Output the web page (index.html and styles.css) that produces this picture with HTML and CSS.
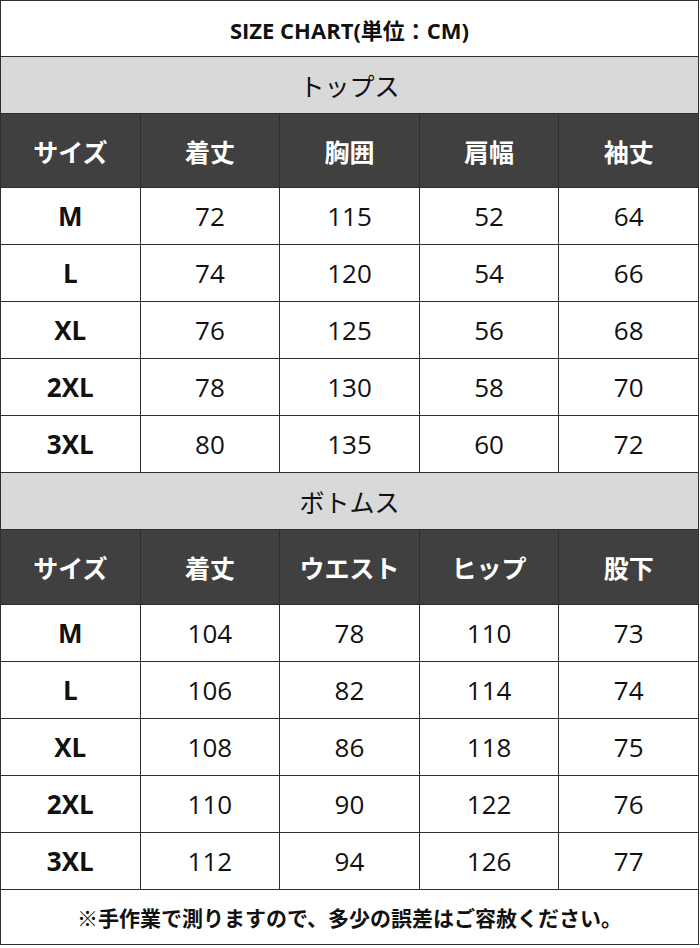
FILE: index.html
```html
<!DOCTYPE html>
<html lang="ja">
<head>
<meta charset="utf-8">
<title>SIZE CHART</title>
<link rel="stylesheet" href="styles.css">
</head>
<body>
<table class="chart">
  <colgroup><col><col><col><col><col></colgroup>
  <tr class="title"><td colspan="5">SIZE CHART(単位：CM)</td></tr>
  <tr class="section"><td colspan="5">トップス</td></tr>
  <tr class="head head-1"><th>サイズ</th><th>着丈</th><th>胸囲</th><th>肩幅</th><th>袖丈</th></tr>
  <tr class="row"><th>M</th><td>72</td><td>115</td><td>52</td><td>64</td></tr>
  <tr class="row"><th>L</th><td>74</td><td>120</td><td>54</td><td>66</td></tr>
  <tr class="row"><th>XL</th><td>76</td><td>125</td><td>56</td><td>68</td></tr>
  <tr class="row"><th>2XL</th><td>78</td><td>130</td><td>58</td><td>70</td></tr>
  <tr class="row"><th>3XL</th><td>80</td><td>135</td><td>60</td><td>72</td></tr>
  <tr class="section"><td colspan="5">ボトムス</td></tr>
  <tr class="head head-2"><th>サイズ</th><th>着丈</th><th>ウエスト</th><th>ヒップ</th><th>股下</th></tr>
  <tr class="row"><th>M</th><td>104</td><td>78</td><td>110</td><td>73</td></tr>
  <tr class="row"><th>L</th><td>106</td><td>82</td><td>114</td><td>74</td></tr>
  <tr class="row"><th>XL</th><td>108</td><td>86</td><td>118</td><td>75</td></tr>
  <tr class="row"><th>2XL</th><td>110</td><td>90</td><td>122</td><td>76</td></tr>
  <tr class="row"><th>3XL</th><td>112</td><td>94</td><td>126</td><td>77</td></tr>
  <tr class="note"><td colspan="5">※手作業で測りますので、多少の誤差はご容赦ください。</td></tr>
</table>
</body>
</html>
```

FILE: styles.css
```css
html, body {
  margin: 0;
  padding: 0;
  background: #ffffff;
}

.chart {
  width: 699px;
  border-collapse: collapse;
  table-layout: fixed;
  font-family: "Open Sans", "Noto Sans CJK JP", sans-serif;
  color: #111111;
}

.chart td,
.chart th {
  border: 1.5px solid #2e2e2e;
  padding: 0;
  text-align: center;
  vertical-align: middle;
}

.title td {
  height: 55px;
  font-size: 22px;
  font-weight: 700;
}

.section td {
  height: 56px;
  background: #d9d9d9;
  font-size: 25px;
  font-weight: 400;
  font-family: "Noto Sans CJK JP", sans-serif;
}

.head th {
  background: #404040;
  color: #ffffff;
  font-size: 25px;
  font-weight: 700;
  font-family: "Noto Sans CJK JP", sans-serif;
}

.head-1 th { height: 73px; }
.head-2 th { height: 74px; }

.row th,
.row td {
  height: 56px;
  font-size: 26px;
}

.row th {
  font-weight: 700;
}

.row td {
  font-weight: 400;
}

.note td {
  height: 54px;
  font-size: 21px;
  font-weight: 700;
  font-family: "Noto Sans CJK JP", sans-serif;
}
```
